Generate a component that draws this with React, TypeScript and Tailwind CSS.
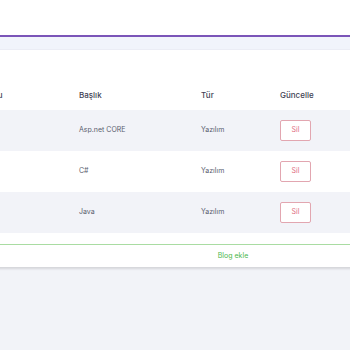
import React from 'react';

const rows = [
  { baslik: 'Asp.net CORE', tur: 'Yazılım' },
  { baslik: 'C#', tur: 'Yazılım' },
  { baslik: 'Java', tur: 'Yazılım' },
];

export default function App() {
  return (
    <div className="w-[350px] h-[350px] overflow-hidden bg-[#f2f3f8] font-['Inter',sans-serif]">
      <div className="w-[700px] -ml-[117px]">
        {/* Top bar */}
        <div className="h-[35px] bg-white" />
        <div className="h-[2px] bg-[#7b55b8]" />
        <div className="h-[13px] bg-[#f1f4fb] border-b border-[#ebedf5]" />

        {/* Card */}
        <div className="bg-white pt-[30px] pb-[11px]">
          <div className="grid grid-cols-[96px_122px_79px_1fr] pl-[100px] h-[30px] items-center text-[8px] font-medium text-[#3f4254]">
            <span>Konu</span>
            <span>Başlık</span>
            <span>Tür</span>
            <span>Güncelle</span>
          </div>
          {rows.map((r, i) => (
            <div
              key={i}
              className={`grid grid-cols-[96px_122px_79px_1fr] pl-[100px] h-[41px] items-center text-[7px] text-[#595d6e] ${
                i % 2 === 0 ? 'bg-[#f2f3f8]' : 'bg-white'
              }`}
            >
              <span />
              <span>{r.baslik}</span>
              <span>{r.tur}</span>
              <span>
                <button className="w-[31px] h-[21px] border border-[#e2a6b0] rounded-[2px] text-[7px] text-[#e0707f] bg-white">
                  Sil
                </button>
              </span>
            </div>
          ))}
        </div>

        {/* Add button */}
        <div className="h-[23px] bg-white border-t border-[#a9dca2] shadow-[0_2px_2px_rgba(0,0,0,0.12)] flex items-center justify-center text-[7px] text-[#4cb84c]">
          Blog ekle
        </div>
      </div>
    </div>
  );
}
